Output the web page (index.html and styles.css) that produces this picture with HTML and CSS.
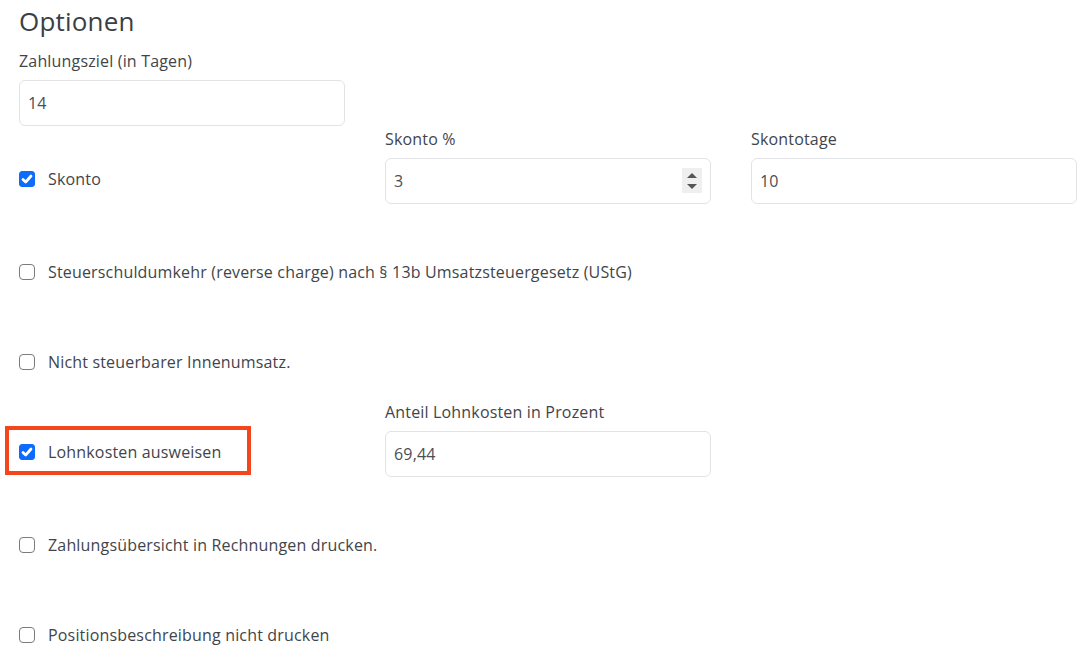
FILE: index.html
```html
<!DOCTYPE html>
<html lang="de">
<head>
	<meta charset="UTF-8">
	<title>Optionen</title>
	<link rel="stylesheet" href="styles.css">
</head>
<body>
	<div id="options">
		<h2 class="title">Optionen</h2>

		<div class="field first">
			<label class="lbl" for="ziel">Zahlungsziel (in Tagen)</label>
			<input class="inp" id="ziel" type="text" value="14">
		</div>

		<div class="row">
			<div class="check">
				<label class="check-line"><input type="checkbox" checked>Skonto</label>
			</div>
			<div class="field">
				<label class="lbl" for="skonto">Skonto %</label>
				<div class="num">
					<input class="inp" id="skonto" type="number" value="3">
					<span class="spin"><i class="up"></i><i class="down"></i></span>
				</div>
			</div>
			<div class="field">
				<label class="lbl" for="tage">Skontotage</label>
				<input class="inp" id="tage" type="text" value="10">
			</div>
		</div>

		<div class="row">
			<div class="check">
				<label class="check-line wide"><input type="checkbox">Steuerschuldumkehr (reverse charge) nach § 13b Umsatzsteuergesetz (UStG)</label>
			</div>
		</div>

		<div class="row">
			<div class="check">
				<label class="check-line"><input type="checkbox">Nicht steuerbarer Innenumsatz.</label>
			</div>
		</div>

		<div class="row">
			<div class="check">
				<label class="check-line marked"><input type="checkbox" checked>Lohnkosten ausweisen</label>
			</div>
			<div class="field">
				<label class="lbl" for="lohn">Anteil Lohnkosten in Prozent</label>
				<input class="inp" id="lohn" type="text" value="69,44">
			</div>
		</div>

		<div class="row">
			<div class="check">
				<label class="check-line"><input type="checkbox">Zahlungsübersicht in Rechnungen drucken.</label>
			</div>
		</div>

		<div class="row">
			<div class="check">
				<label class="check-line"><input type="checkbox">Positionsbeschreibung nicht drucken</label>
			</div>
		</div>
	</div>
</body>
</html>
```

FILE: styles.css
```css
*{
	margin: 0;
	padding: 0;
	box-sizing: border-box;
}
body{
	background: #fff;
	font-family: "Open Sans", "Liberation Sans", sans-serif;
	font-size: 16px;
	letter-spacing: 0.17px;
	color: #3f454b;
}
#options{
	padding: 0 19px;
	width: 1096px;
}
.title{
	font-size: 26px;
	font-weight: 400;
	line-height: 36px;
	letter-spacing: 0.2px;
	padding-top: 3px;
	margin-bottom: 10px;
	color: #3a3f44;
}
.field{
	display: flex;
	flex-direction: column;
}
.field.first{
	width: 326px;
	margin-bottom: 1px;
}
.lbl{
	line-height: 24px;
	margin-bottom: 7px;
}
.inp{
	width: 100%;
	height: 46px;
	border: 1px solid #e1e3e6;
	border-radius: 6px;
	padding: 0 8px;
	font-family: inherit;
	font-size: 16px;
	letter-spacing: 0.17px;
	color: #4a4f55;
	background: #fff;
	outline: none;
}
.inp::-webkit-inner-spin-button,
.inp::-webkit-outer-spin-button{
	-webkit-appearance: none;
	margin: 0;
}
.num{
	position: relative;
}
.spin{
	position: absolute;
	right: 9px;
	top: 10px;
	width: 20px;
	height: 25px;
	background: #efefef;
	display: flex;
	flex-direction: column;
	align-items: center;
	justify-content: center;
	gap: 6px;
}
.spin i{
	display: block;
	width: 0;
	height: 0;
	border-left: 5px solid transparent;
	border-right: 5px solid transparent;
}
.spin .up{
	border-bottom: 5px solid #555;
}
.spin .down{
	border-top: 5px solid #555;
}
.row{
	display: grid;
	grid-template-columns: 326px 326px 326px;
	column-gap: 40px;
	margin-bottom: 16px;
}
.check{
	padding-top: 29px;
}
.check-line{
	position: relative;
	height: 45px;
	display: flex;
	align-items: center;
	line-height: 24px;
	white-space: nowrap;
}
.check-line input{
	-webkit-appearance: none;
	appearance: none;
	flex: none;
	width: 16px;
	height: 16px;
	margin-right: 13px;
	border: 1px solid #7b7b7b;
	border-radius: 4px;
	background: #fff;
}
.check-line input:checked{
	border-color: #0f6bfb;
	border-radius: 3px;
	background: #0f6bfb url("data:image/svg+xml,%3csvg xmlns='http://www.w3.org/2000/svg' viewBox='0 0 16 16'%3e%3cpath fill='none' stroke='%23fff' stroke-width='2.8' stroke-linecap='round' stroke-linejoin='round' d='M4 8.4l2.7 2.7L12 5'/%3e%3c/svg%3e") center / 16px 16px no-repeat;
}
.marked::after{
	content: "";
	position: absolute;
	left: -14px;
	top: -3px;
	width: 246px;
	height: 49px;
	box-sizing: border-box;
	border: 4px solid #f4461d;
}
```
